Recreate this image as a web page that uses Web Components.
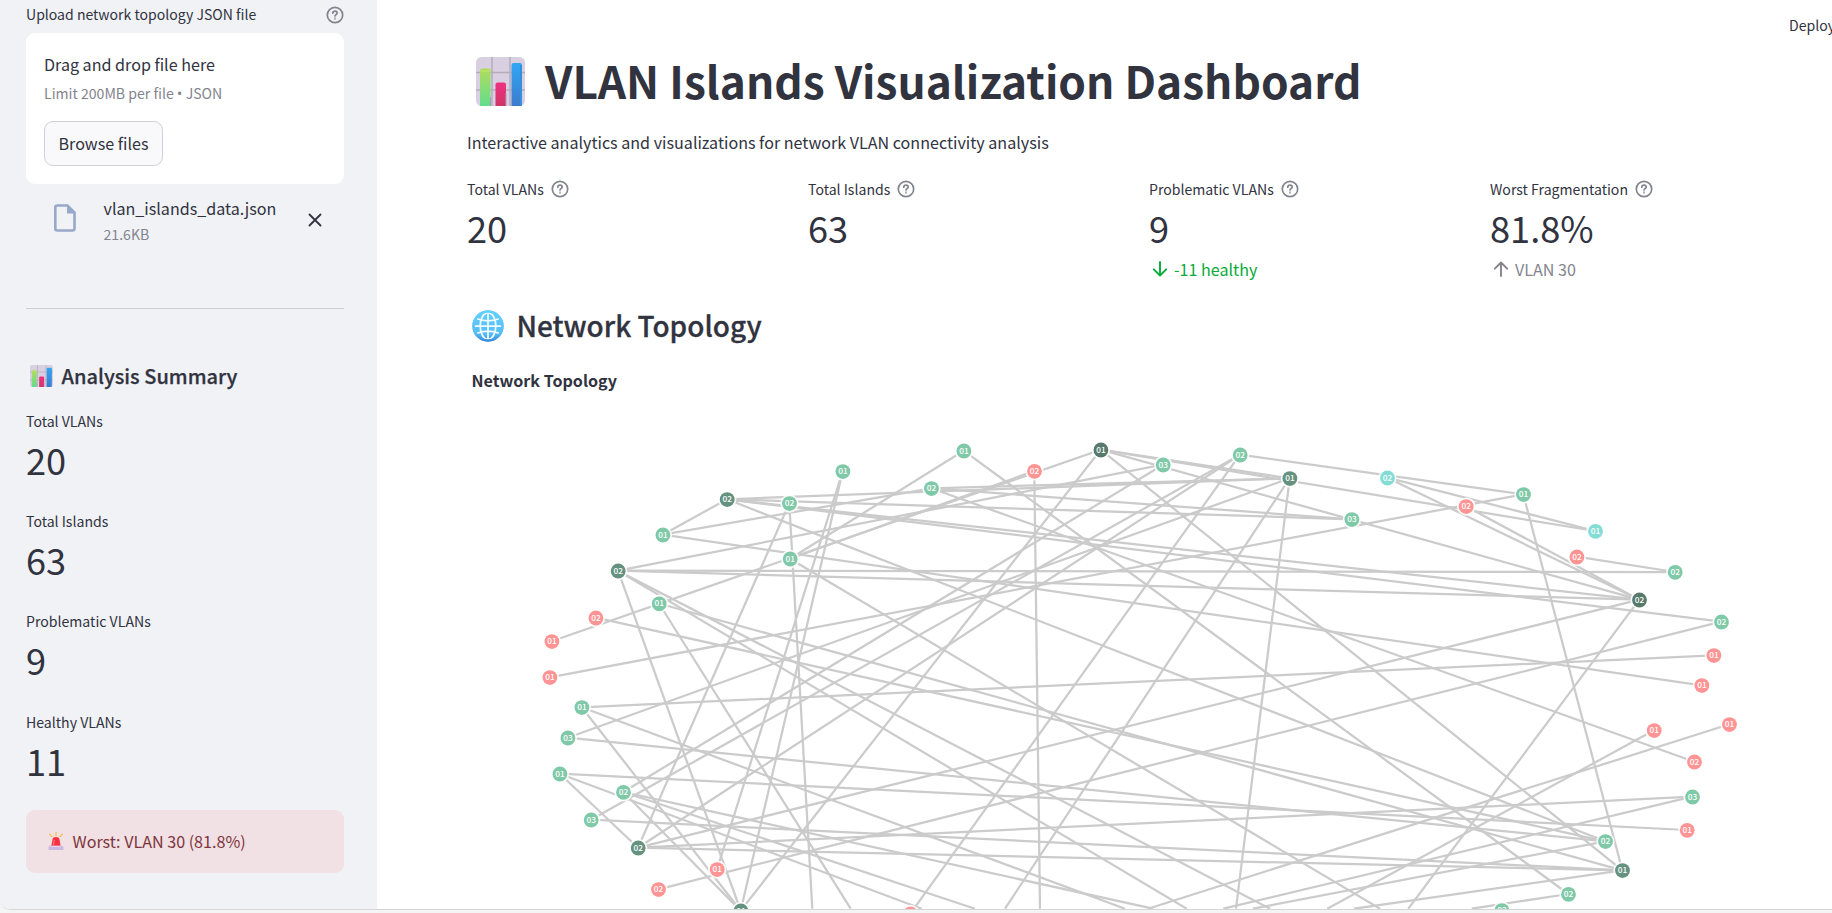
<!DOCTYPE html>
<html lang="en">
<head>
<meta charset="utf-8">
<title>VLAN Islands Visualization Dashboard</title>
<style>
html,body{margin:0;height:100%;overflow:hidden}
body{background:#f4f4f4;color:#31333f;font-family:"Noto Sans CJK SC","Noto Sans",sans-serif;font-size:16.1px}
</style>
</head>
<body>
<app-shell>
  <side-bar slot="side">
    <file-uploader label="Upload network topology JSON file" file="vlan_islands_data.json" size="21.6KB"></file-uploader>
    <side-heading>Analysis Summary</side-heading>
    <metric-card label="Total VLANs" value="20"></metric-card>
    <metric-card label="Total Islands" value="63"></metric-card>
    <metric-card label="Problematic VLANs" value="9"></metric-card>
    <metric-card label="Healthy VLANs" value="11"></metric-card>
    <alert-box>Worst: VLAN 30 (81.8%)</alert-box>
  </side-bar>
  <main-page>
    <span slot="title">VLAN Islands Visualization Dashboard</span>
    <span slot="sub">Interactive analytics and visualizations for network VLAN connectivity analysis</span>
    <metric-card slot="metrics" help label="Total VLANs" value="20"></metric-card>
    <metric-card slot="metrics" help label="Total Islands" value="63"></metric-card>
    <metric-card slot="metrics" help label="Problematic VLANs" value="9" delta="-11 healthy" dir="down"></metric-card>
    <metric-card slot="metrics" help label="Worst Fragmentation" value="81.8%" delta="VLAN 30" dir="up"></metric-card>
    <span slot="section">Network Topology</span>
    <span slot="chart-title">Network Topology</span>
    <topology-graph slot="graph"></topology-graph>
  </main-page>
</app-shell>
<script>
const define = (name, html, setup) => customElements.define(name, class extends HTMLElement {
  connectedCallback() {
    if (this.shadowRoot) return;
    const root = this.attachShadow({mode: 'open'});
    root.innerHTML = typeof html === 'function' ? html(this) : html;
    if (setup) setup(this, root);
  }
});

define('help-icon', `<style>:host{display:block;width:18px;height:18px}svg{display:block}</style>
<svg width="18" height="18" viewBox="0 0 18 18" fill="none" stroke="#83858e" stroke-width="1.700" stroke-linecap="round"><circle cx="9" cy="9" r="7.700"/><path d="M6.800 7.200c.1-1.300 1-2 2.200-2 1.200 0 2.200.800 2.200 1.900 0 1.500-2.200 1.500-2.200 2.900"/><circle cx="9" cy="12.600" r=".3"/></svg>`);

define('chart-emoji', `<style>:host{display:block}svg{display:block;width:100%;height:100%}</style>
<svg viewBox="0 0 49 49" preserveAspectRatio="none">
<defs><linearGradient id="p" x1="0" y1="0" x2="0" y2="1"><stop stop-color="#d8d0df"/><stop offset="1" stop-color="#d9cfe6"/></linearGradient>
<linearGradient id="g" x1="0" y1="0" x2="0" y2="1"><stop stop-color="#b0dc5c"/><stop offset="1" stop-color="#63dd8c"/></linearGradient>
<linearGradient id="r" x1="0" y1="0" x2="0" y2="1"><stop stop-color="#f0327f"/><stop offset="1" stop-color="#cf3568"/></linearGradient>
<linearGradient id="b" x1="0" y1="0" x2="0" y2="1"><stop stop-color="#32a6f6"/><stop offset="1" stop-color="#3d7bcb"/></linearGradient>
<clipPath id="c"><rect width="49" height="49" rx="5.500"/></clipPath></defs>
<g clip-path="url(#c)"><rect width="49" height="49" fill="url(#p)"/>
<path d="M16 0v49M34 0v49M0 15.500h49M0 33h49" stroke="#b5adba" stroke-width="1.500"/>
<path d="M4 13.500q0-2 2-2h6.500q2 0 2 2V49H4z" fill="url(#g)"/><path d="M4 13.700q5 1.200 10.500 0" stroke="#c3e96f" fill="none"/>
<path d="M19.500 27.500q0-2 2-2h6.500q2 0 2 2V49H19.500z" fill="url(#r)"/><path d="M14.500 40v9M30 36v13" stroke="#a99bbd" stroke-width="1"/>
<path d="M35.500 8q0-2 2-2H44q2 0 2 2v41H35.500z" fill="url(#b)"/><path d="M45 8v41" stroke="#3390dd" stroke-width="2"/></g></svg>`);

define('globe-emoji', `<style>:host{display:block;width:32px;height:32px}svg{display:block}</style>
<svg width="32" height="32" viewBox="0 0 32 32" fill="none"><defs><linearGradient id="g" x1="0" y1="0" x2="0" y2="1"><stop stop-color="#62d0fb"/><stop offset=".75" stop-color="#56bdf8"/><stop offset="1" stop-color="#3c8edb"/></linearGradient></defs>
<circle cx="16" cy="16" r="15.700" fill="url(#g)"/>
<g stroke="#f2fbff" stroke-width="1.750"><ellipse cx="16" cy="16" rx="7.800" ry="13.500"/><path d="M16 2.500v27M2.500 16h27M5 8.800q11 4 22 0M5 23.200q11-4 22 0"/></g>
<circle cx="16" cy="16" r="14.400" stroke="url(#g)" stroke-width="2.400"/></svg>`);

define('siren-emoji', `<style>:host{display:block;width:16px;height:18px}svg{display:block}</style>
<svg width="16" height="18" viewBox="0 0 16 18"><path d="M3.300 14 4.500 7.400Q4.900 5 8 5T11.500 7.400L12.700 14z" fill="#f8313f"/><path d="M5.300 13 6.300 8" stroke="#ff7d80" stroke-width="1.200"/>
<path d="M8 .5v3M1.800 2.300l2 2.200M14.200 2.300l-2 2.200" stroke="#f6c35c" stroke-width="1.500" stroke-linecap="round"/><path d="M.5 15.800q0-2 2-2h11q2 0 2 2V18H.5z" fill="#cbb9df"/><path d="M3 14.300h10" stroke="#e8ddf0"/></svg>`);

define('app-shell', `<style>:host{display:flex;box-sizing:border-box;height:913px;padding-bottom:4px;background:#f4f4f4}
.win{display:flex;flex:1;overflow:hidden;border-bottom:1px solid #d6d6d6;border-bottom-left-radius:10px;background:#fff;box-sizing:border-box;height:910px}
::slotted(side-bar){flex:0 0 377px}::slotted(main-page){flex:1;min-width:0}</style><div class="win"><slot name="side"></slot><slot></slot></div>`);

define('side-bar', `<style>:host{display:block;box-sizing:border-box;background:#f0f2f6;padding:5px 33px 0 26px}
::slotted(metric-card){display:block;height:100.200px}</style><slot></slot>`);

define('file-uploader', el => `<style>:host{display:block;box-sizing:border-box;height:304px;border-bottom:1px solid #cdcfd4}
.label{display:flex;justify-content:space-between;height:28px;font-size:14.050px;line-height:18px}help-icon{margin-top:1px}
.drop{box-sizing:border-box;height:151px;border-radius:9px;background:#fff;padding:19px 18px}
.t{line-height:24px;height:24px}.l{font-size:14.100px;line-height:20px;height:20px;margin-top:7px;color:#83858e}
.dot{font-family:"Open Sans",sans-serif;font-size:15px;line-height:1}
button{display:block;box-sizing:border-box;width:119px;height:45px;margin-top:18px;border:1px solid #d0d1d5;border-radius:9px;background:#f9f9fb;color:inherit;font:inherit;line-height:24px;padding:0 0 2px}
.file{display:flex;align-items:flex-start;padding:12px 22px 0 28px}
.names{flex:1;margin-left:27.500px}.n{line-height:24px;height:24px}.s{font-size:14.100px;line-height:20px;margin-top:4px;color:#83858e}
.doc{margin-top:8px;display:block}.x{margin-top:17px;display:block}</style>
<div class="label"><span>${el.getAttribute('label')}</span><help-icon></help-icon></div>
<div class="drop"><div class="t">Drag and drop file here</div><div class="l">Limit 200MB per file <span class="dot">•</span> JSON</div><button>Browse files</button></div>
<div class="file"><svg class="doc" width="22" height="28" viewBox="0 0 22 28"><path d="M3 1.500h10.500L20.500 8.500V24.500q0 2-2 2H3.300q-2 0-2-2V3.500q0-2 2-2z" fill="none" stroke="#98a8c9" stroke-width="2.600"/><path d="M13 1v8.500h8.500z" fill="#98a8c9"/></svg>
<div class="names"><div class="n">${el.getAttribute('file')}</div><div class="s">${el.getAttribute('size')}</div></div>
<svg class="x" width="14" height="14" viewBox="0 0 14 14" stroke="#31333f" stroke-width="1.800" stroke-linecap="round"><path d="M1.500 1.500l11 11M12.500 1.500l-11 11"/></svg></div>`);

define('side-heading', `<style>:host{display:flex;height:47px;margin-top:56px;padding-left:4px;gap:8.500px;font-size:20px;font-weight:500;line-height:22px;-webkit-text-stroke:.25px}
chart-emoji{width:23px;height:22px}</style><chart-emoji></chart-emoji><span><slot></slot></span>`);

define('metric-card', el => {
  const d = el.getAttribute('delta'), up = el.getAttribute('dir') === 'up';
  return `<style>:host{display:block}.l{display:flex;gap:7px;font-size:14.100px;line-height:18px;height:18px}.v{font-size:36.200px;line-height:40px;margin-top:9px}
.d{display:flex;gap:6px;align-items:center;height:24px;margin-top:10px;margin-left:3px;color:${up ? '#83858e' : '#09ab3b'}}</style>
<div class="l"><span>${el.getAttribute('label')}</span>${el.hasAttribute('help') ? '<help-icon></help-icon>' : ''}</div>
<div class="v">${el.getAttribute('value')}</div>${d ? `<div class="d"><svg width="16" height="16" viewBox="0 0 16 16" fill="none" stroke="currentColor" stroke-width="1.900" stroke-linecap="round" stroke-linejoin="round"><path d="${up ? 'M8 15V1.500M1.800 7.700L8 1.500l6.200 6.200' : 'M8 1v13.500M1.800 8.300L8 14.500l6.200-6.200'}"/></svg><span>${d}</span></div>` : ''}`;
});

define('alert-box', `<style>:host{display:flex;box-sizing:border-box;height:63px;margin-top:-2.800px;padding:0 22px 1px;align-items:center;gap:8.500px;border-radius:9px;background:#f1e0e4;color:#7d353b}</style><siren-emoji></siren-emoji><span><slot></slot></span>`);

define('main-page', `<style>:host{display:flex;flex-direction:column}
header{height:46px;display:flex;justify-content:flex-end;box-sizing:border-box;padding-top:15px;font-size:14.100px;line-height:20px}header span{width:43px;white-space:nowrap}
.title{display:flex;gap:20px;height:84px;padding-left:99px;align-items:flex-start;font-size:44.250px;font-weight:700;line-height:68px;white-space:nowrap}
.title chart-emoji{width:49px;height:49px;margin-top:11px}
.sub{padding-left:90px;line-height:24px;height:50px}
.metrics{display:grid;grid-template-columns:repeat(4,341px);padding-left:90px;height:130px}
.sec{display:flex;padding-left:95px;gap:12.500px;height:58px;font-size:27.950px;font-weight:500;line-height:31px;-webkit-text-stroke:.3px}
.ct{padding-left:94.500px;font-weight:700;line-height:24px;height:32px}
</style>
<header><span>Deploy</span></header>
<div class="title"><chart-emoji></chart-emoji><slot name="title"></slot></div>
<div class="sub"><slot name="sub"></slot></div>
<div class="metrics"><slot name="metrics"></slot></div>
<div class="sec"><globe-emoji></globe-emoji><slot name="section"></slot></div>
<div class="ct"><slot name="chart-title"></slot></div>
<slot name="graph"></slot>`);

const NODES = {
A:[551.7,641.3,'01','r'],B:[595.7,617.7,'02','r'],C:[659,603.5,'01','g'],D:[618,570.7,'02','d'],E:[662.7,534.7,'01','g'],F:[727,499.3,'02','d'],
G:[789.3,503.3,'02','g'],H:[790,558.7,'01','g'],I:[842.7,471.3,'01','g'],J:[963.7,450.7,'01','g'],K:[931.3,488.3,'02','g'],L:[1034.3,471,'02','r'],
M:[1100.7,449.7,'01','k'],N:[1163,464.7,'03','g'],O:[1240,454.7,'02','g'],P:[1289.7,478.3,'01','d'],Q:[1351.7,519.3,'03','g'],R:[1387.3,477.7,'02','c'],
S:[1466,506.3,'02','r'],T:[1523.3,494.3,'01','g'],U:[1595.3,531,'01','c'],V:[1576.7,556.7,'02','r'],W:[1675,572,'02','g'],X:[1639.3,599.7,'02','k'],
Y:[1721.3,621.7,'02','g'],Z:[1713.7,655.3,'01','r'],a:[549.7,677.3,'01','r'],b:[581.7,707.3,'01','g'],c:[567.7,737.7,'03','g'],d:[559.7,773.7,'01','g'],
e:[623.3,792,'02','g'],f:[591,819.7,'03','g'],g:[638,847.7,'02','d'],h:[717,869.3,'01','r'],i:[658.3,889.3,'02','r'],j:[740.7,910.7,'01','d'],
k:[910.3,913.7,'02','r'],l:[1501.7,910.3,'02','g'],m:[1701.7,685.3,'01','r'],n:[1729.3,724.3,'01','r'],o:[1654,730.3,'01','r'],p:[1694.3,761.7,'02','r'],
q:[1692.3,796.7,'03','g'],r:[1687,830,'01','r'],s:[1605.3,841.3,'02','g'],t:[1622.3,870.3,'01','d'],u:[1568.3,894,'02','g']};
const EDGES = 'AM HL HJ Bs Ct DN DW DX Dj EF EK Em FP FQ FX FY Fs Gg Ih Ij Ju KP KQ Kp Mj MP MU MX Mt Ne Of Og Ok OT Pc Ta RU RX SX Tt VW Xg Yi Zb bj cs dr dg ej ft gq gt'.split(' ');
/* Links that leave the visible part of the canvas: [node, x at the lower edge] */
const OPEN = [['C',850.7],['D',1186.7],['D',1270],['G',812.3],['H',1380],['L',1040],['P',1005],['P',1236],['X',1408.3],['b',1125],['d',921.7],['e',1153],['e',975],['n',1148],['o',1327.3],['q',1223.3],['s',1253],['t',1354],['u',1471.7]];
const FILL = {g:'#80c9a8',r:'#ff9494',d:'#65917f',k:'#587a6d',c:'#83ddd5'};

define('topology-graph', `<style>:host{display:block;flex:1;min-height:0;overflow:hidden}svg{display:block}
text{font:500 8.300px "Noto Sans CJK SC","Noto Sans",sans-serif;fill:#fff;text-anchor:middle}line{stroke:#cbcbcb;stroke-width:2.250}</style>
<svg width="1455" height="509" viewBox="377 400 1455 509"></svg>`, (el, root) => {
  const line = (x1, y1, x2, y2) => `<line x1="${x1}" y1="${y1}" x2="${x2}" y2="${y2}"/>`;
  let s = '';
  for (const [p, q] of EDGES) s += line(NODES[p][0], NODES[p][1], NODES[q][0], NODES[q][1]);
  for (const [p, x] of OPEN) s += line(NODES[p][0], NODES[p][1], x, 908.7);
  for (const [x, y, label, kind] of Object.values(NODES))
    s += `<circle cx="${x + .2}" cy="${y + .3}" r="9.200" fill="#fff" fill-opacity=".85"/><circle cx="${x + .2}" cy="${y + .3}" r="7.400" fill="${FILL[kind]}"/><text x="${x + .2}" y="${y + 2.8}">${label}</text>`;
  root.querySelector('svg').innerHTML = s;
});
</script>
</body>
</html>
